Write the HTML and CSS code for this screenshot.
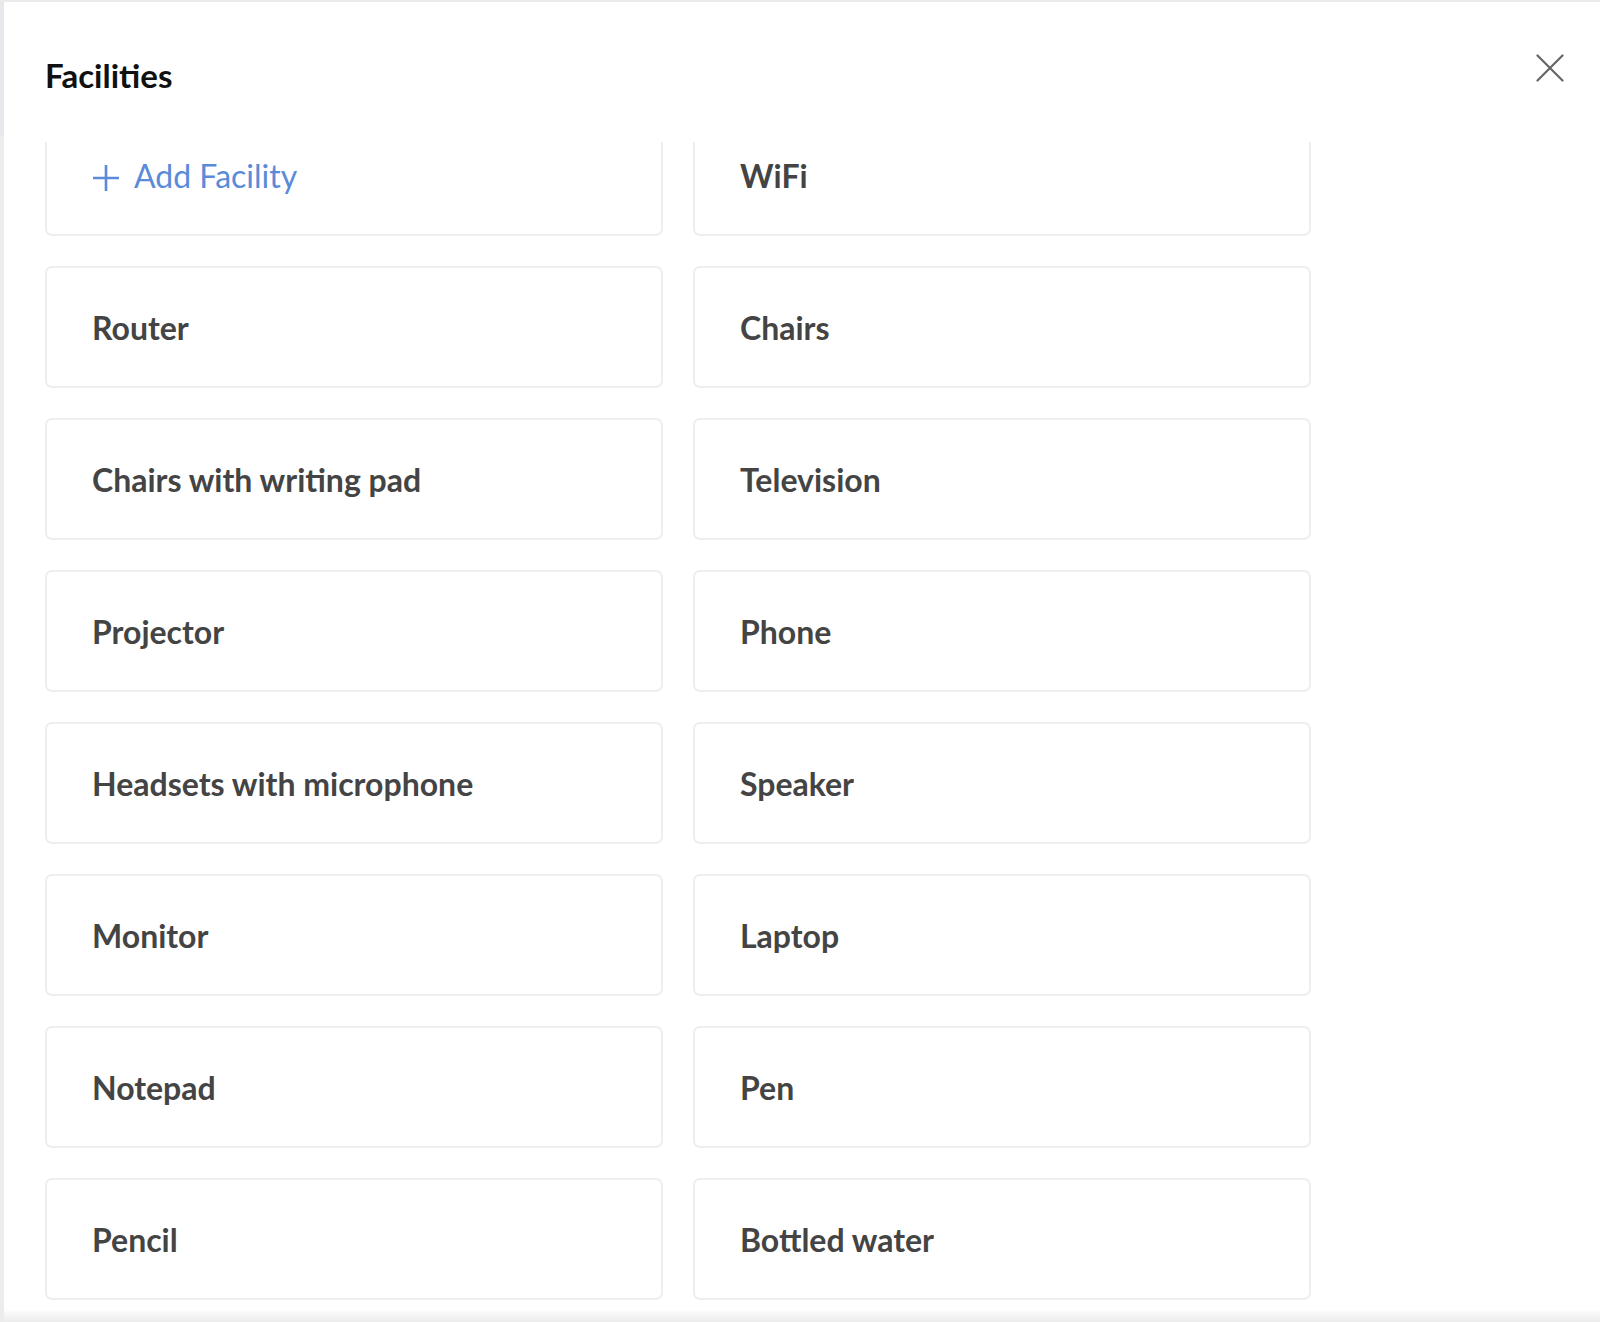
FILE: index.html
```html
<!DOCTYPE html>
<html lang="en">
<head>
<meta charset="utf-8">
<title>Facilities</title>
<link rel="stylesheet" href="styles.css">
</head>
<body>
<div class="frame">
  <div class="backdrop-strip"></div>
  <div class="modal">
    <header class="modal-header">
      <h1 class="title">Facilities</h1>
      <button class="close" aria-label="Close">
        <svg width="28" height="28" viewBox="0 0 28 28"><path d="M1.5 1.5 L26.5 26.5 M26.5 1.5 L1.5 26.5" stroke="#666" stroke-width="2.2" stroke-linecap="round" fill="none"/></svg>
      </button>
    </header>
    <div class="list-viewport">
      <div class="grid">
        <div class="card add">
          <svg class="plus" width="28" height="28" viewBox="0 0 28 28"><path d="M14 1 V27 M1 14 H27" stroke="#5b8bd8" stroke-width="2.6" fill="none"/></svg>
          <span>Add Facility</span>
        </div>
        <div class="card">WiFi</div>
        <div class="card">Router</div>
        <div class="card">Chairs</div>
        <div class="card">Chairs with writing pad</div>
        <div class="card">Television</div>
        <div class="card">Projector</div>
        <div class="card">Phone</div>
        <div class="card">Headsets with microphone</div>
        <div class="card">Speaker</div>
        <div class="card">Monitor</div>
        <div class="card">Laptop</div>
        <div class="card">Notepad</div>
        <div class="card">Pen</div>
        <div class="card">Pencil</div>
        <div class="card">Bottled water</div>
      </div>
    </div>
    <div class="bottom-shade"></div>
  </div>
</div>
</body>
</html>
```

FILE: styles.css
```css
* { box-sizing: border-box; }
html, body { margin: 0; padding: 0; }
body {
  width: 1600px;
  height: 1322px;
  overflow: hidden;
  background: #ebebeb;
  font-family: Lato, "Open Sans", "Liberation Sans", sans-serif;
}
.frame {
  display: flex;
  height: 1322px;
  padding-top: 2px;
}
.backdrop-strip {
  width: 4px;
  flex: none;
  background:
    linear-gradient(#e8e8ec, #e8e8ec) 0 0 / 4px 134px no-repeat,
    #ececef;
}
.modal {
  flex: 1;
  background: #fff;
  display: flex;
  flex-direction: column;
  height: 1320px;
}
.modal-header {
  height: 140px;
  flex: none;
  display: flex;
  align-items: flex-start;
  justify-content: space-between;
  padding: 0 36px 0 41px;
}
.title {
  margin: 54px 0 0;
  font-size: 33px;
  font-weight: 700;
  color: #111;
  line-height: 38px;
}
.close {
  margin-top: 52px;
  border: 0;
  background: none;
  padding: 0;
  width: 28px;
  height: 28px;
  cursor: pointer;
}
.close svg { display: block; }
.list-viewport {
  flex: 1;
  overflow: hidden;
  padding-left: 41px;
}
.grid {
  margin-top: -28px;
  display: grid;
  grid-template-columns: 618px 618px;
  grid-auto-rows: 122px;
  column-gap: 30px;
  row-gap: 30px;
}
.card {
  border: 2px solid #eeeeee;
  border-radius: 7px;
  display: flex;
  align-items: center;
  padding-left: 45px;
  font-size: 32px;
  font-weight: 700;
  color: #444;
}
.card.add {
  font-weight: 400;
  color: #5b8bd8;
  gap: 14px;
  align-items: flex-end;
  padding-bottom: 39px;
}
.plus { display: block; margin-bottom: 3px; }
.bottom-shade {
  height: 12px;
  flex: none;
  background: linear-gradient(#fdfdfd, #ececec);
}
```
